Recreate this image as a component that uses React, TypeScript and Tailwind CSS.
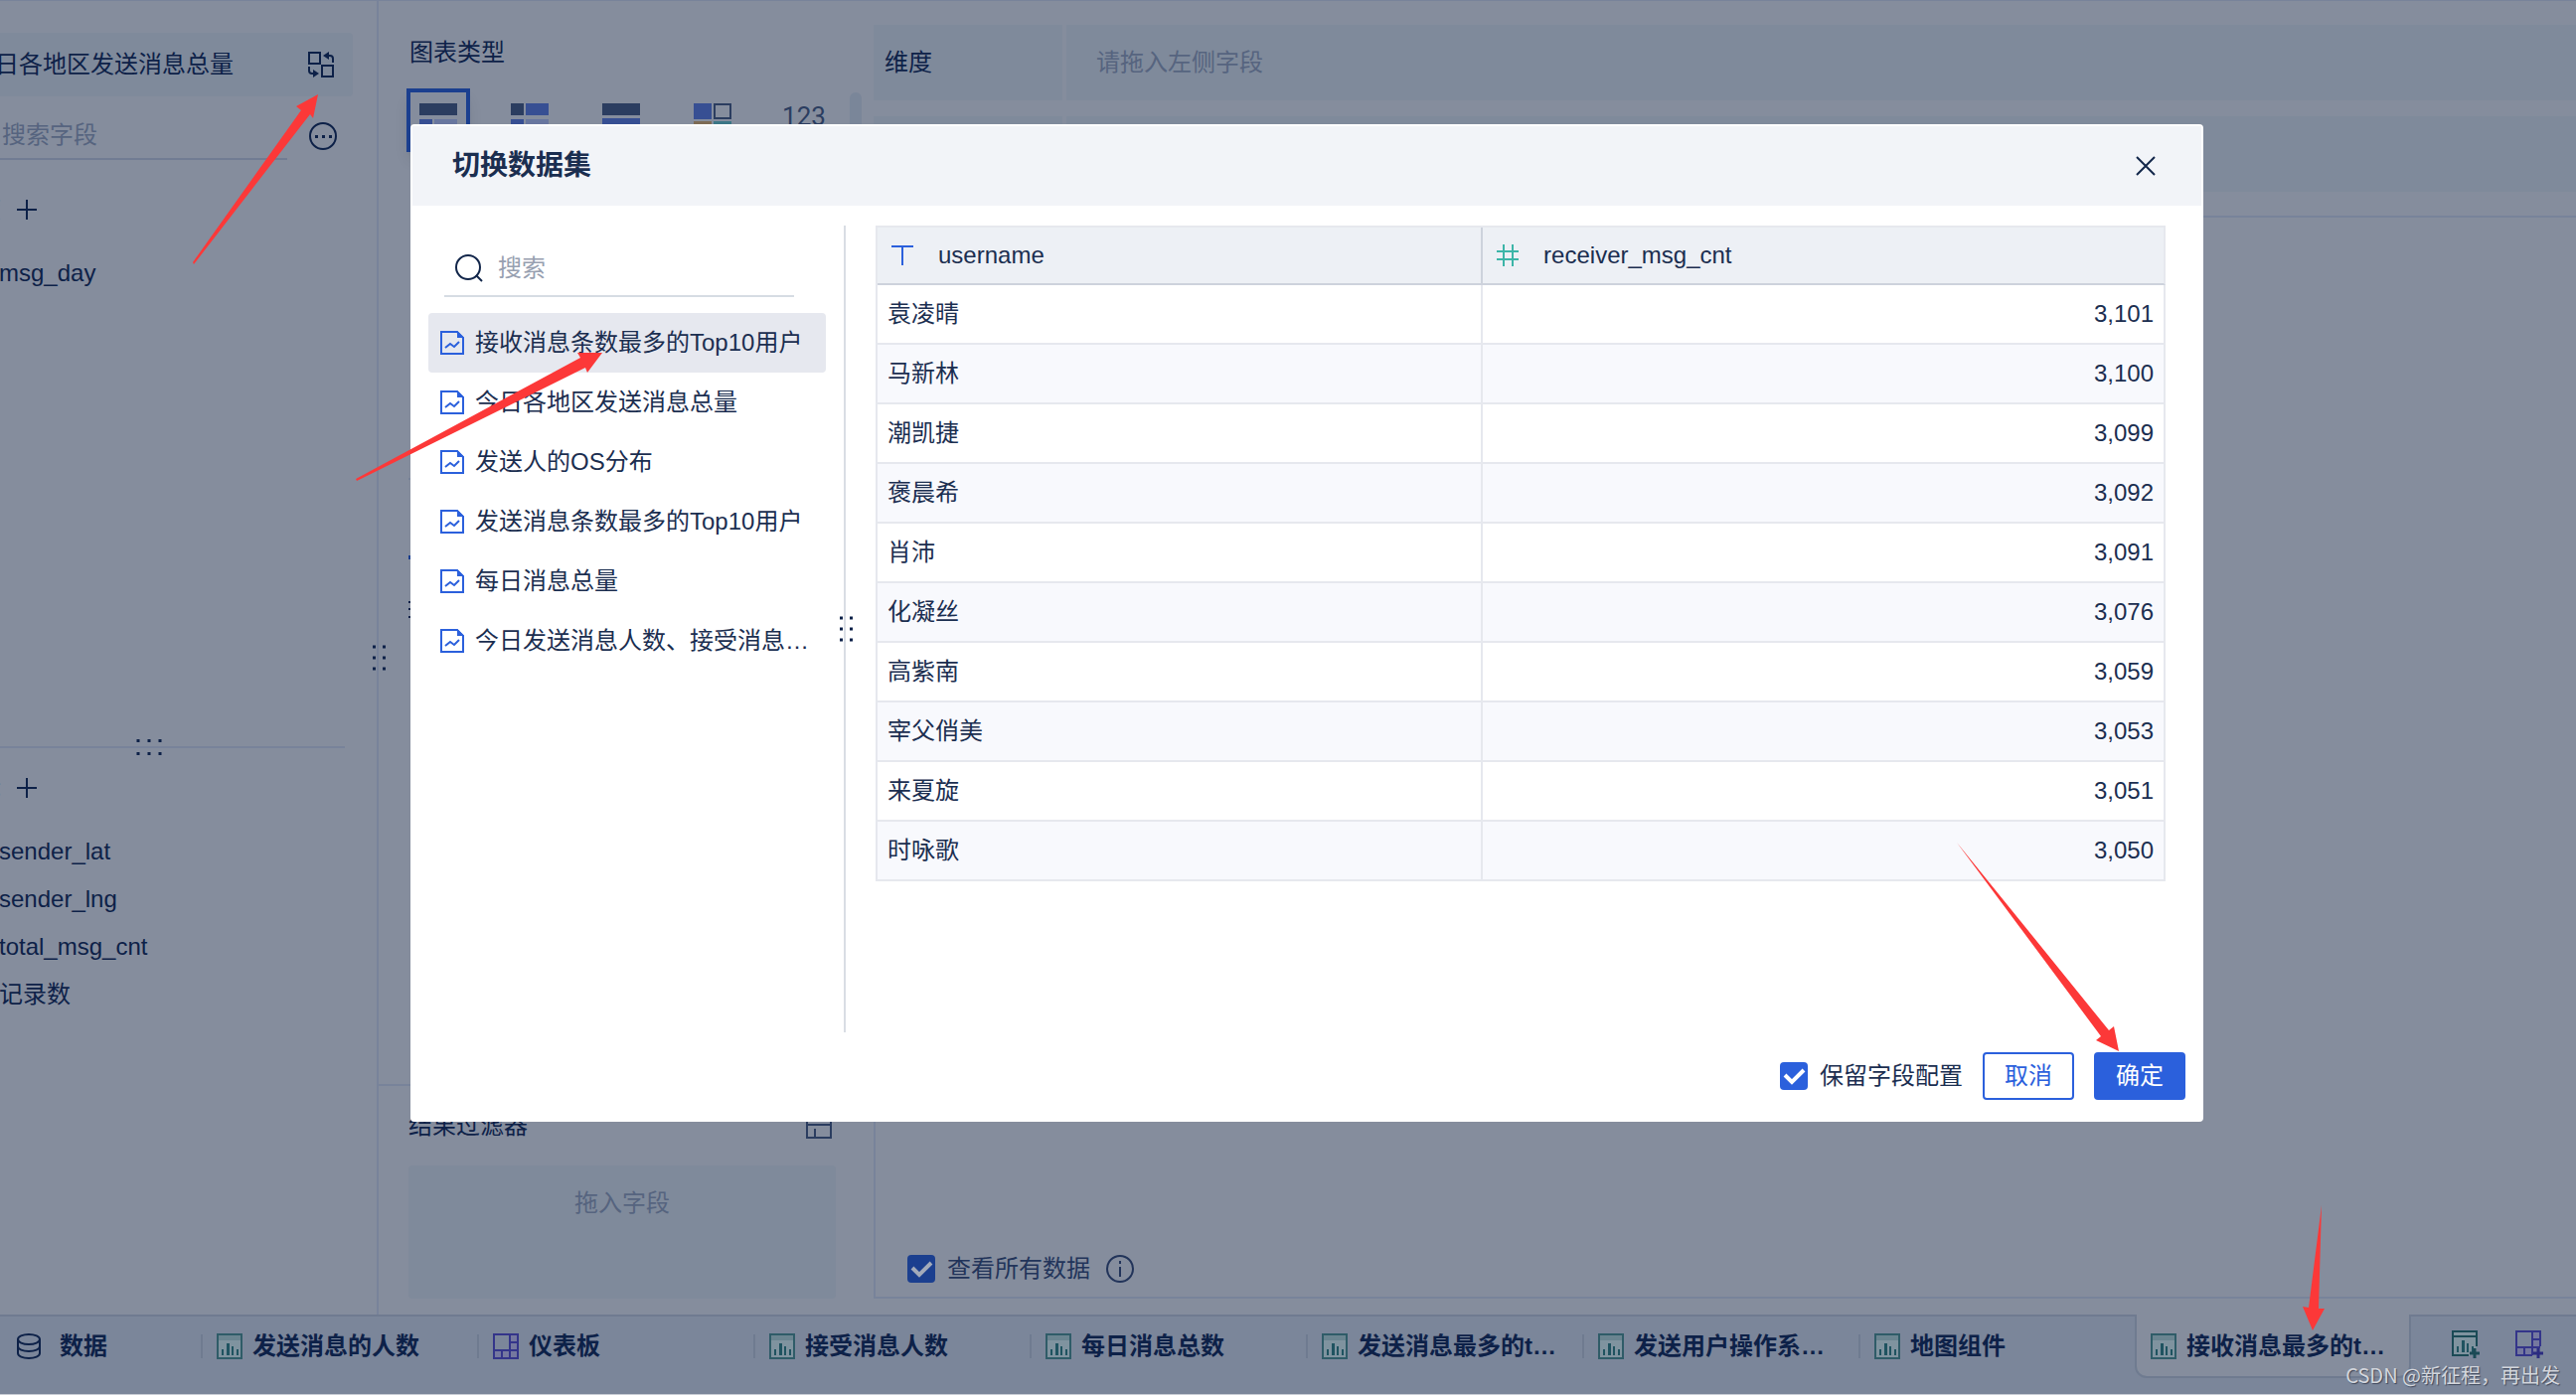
import { useState } from "react";
import type { ReactNode } from "react";

interface DatasetRow {
  username: string;
  count: string;
}

interface BottomTab {
  name: string;
  kind: "chart" | "dashboard";
}

const DATASETS = [
  "接收消息条数最多的Top10用户",
  "今日各地区发送消息总量",
  "发送人的OS分布",
  "发送消息条数最多的Top10用户",
  "每日消息总量",
  "今日发送消息人数、接受消息人数",
];

const ROWS: DatasetRow[] = [
  { username: "袁凌晴", count: "3,101" },
  { username: "马新林", count: "3,100" },
  { username: "潮凯捷", count: "3,099" },
  { username: "褒晨希", count: "3,092" },
  { username: "肖沛", count: "3,091" },
  { username: "化凝丝", count: "3,076" },
  { username: "高紫南", count: "3,059" },
  { username: "宰父俏美", count: "3,053" },
  { username: "来夏旋", count: "3,051" },
  { username: "时咏歌", count: "3,050" },
];

const TABS: BottomTab[] = [
  { name: "发送消息的人数", kind: "chart" },
  { name: "仪表板", kind: "dashboard" },
  { name: "接受消息人数", kind: "chart" },
  { name: "每日消息总数", kind: "chart" },
  { name: "发送消息最多的top10", kind: "chart" },
  { name: "发送用户操作系统分布", kind: "chart" },
  { name: "地图组件", kind: "chart" },
];

const MEASURES = ["sender_lat", "sender_lng", "total_msg_cnt", "记录数"];

const SwapIcon = () => (
  <svg width="26" height="28" viewBox="0 0 26 28" fill="none" stroke="currentColor" strokeWidth="2">
    <path d="M1 2h11v11H1zM14 15h11v11H14z" />
    <path d="M20 5h2a3 3 0 0 1 3 3v4M6 23H4a3 3 0 0 1-3-3v-4" />
    <path d="M15 5l6-4v8zM11 23l-6-4v8z" fill="currentColor" stroke="none" />
  </svg>
);

const MoreIcon = () => (
  <svg width="28" height="28" viewBox="0 0 28 28" fill="none">
    <circle cx="14" cy="14" r="13" stroke="currentColor" strokeWidth="2" />
    <path d="M6 13h3v3H6zM13 13h3v3h-3zM20 13h3v3h-3z" fill="currentColor" />
  </svg>
);

const PlusIcon = () => (
  <svg width="20" height="20" viewBox="0 0 20 20" stroke="currentColor" strokeWidth="2">
    <path d="M10 0v20M0 10h20" />
  </svg>
);

const FileIcon = () => (
  <svg className="shrink-0" width="26" height="26" viewBox="0 0 26 26" fill="none" stroke="#2b60dc" strokeWidth="2">
    <path d="M2 2h16l6 6v16H2z" />
    <path d="M18 1v7h7z" fill="#2b60dc" stroke="none" />
    <path d="M6 18l5-4 4 3 5-5" />
  </svg>
);

const SearchIcon = () => (
  <svg width="30" height="30" viewBox="0 0 30 30" fill="none" stroke="#12264a" strokeWidth="2">
    <circle cx="14" cy="14" r="12" />
    <path d="M22 22l6 6" />
  </svg>
);

const ChartIcon = ({ add = false }: { add?: boolean }) => (
  <svg className="shrink-0" width="30" height="30" viewBox="0 0 30 30" fill="none">
    <rect x="3" y="3" width="24" height="24" fill="#7f939f" />
    <path
      d={add ? "M19 27H3V3h24v15M3 8h24" : "M3 3h24v24H3z"}
      stroke={add ? "#1b4a56" : "#2f5c68"}
      strokeWidth="2"
    />
    {!add && <path d="M4 4h22v5H4z" fill="#6a8490" />}
    <path d="M7 18h2v6H7zM12 12h3v12h-3zM17 15h2v9h-2zM22 18h2v6h-2z" fill="#1f5360" />
    {add && <path d="M25 20v10M20 25h10" stroke="#1b4a56" strokeWidth="3" />}
  </svg>
);

const DashboardIcon = ({ add = false }: { add?: boolean }) => (
  <svg className="shrink-0" width="30" height="30" viewBox="0 0 30 30" fill="none">
    <path d="M19 3h8v24H3v-8h16z" fill="#75789f" />
    <path
      d={add ? "M19 27H3V3h24v15M19 3v24M3 19h24M11 19v8M19 11h8" : "M3 3h24v24H3zM19 3v24M3 19h24M11 19v8M19 11h8"}
      stroke="#34358a"
      strokeWidth="2"
    />
    {add && <path d="M25 20v10M20 25h10" stroke="#2b2c80" strokeWidth="3" />}
  </svg>
);

const DatabaseIcon = () => (
  <svg width="26" height="28" viewBox="0 0 26 28" fill="none" stroke="currentColor" strokeWidth="2">
    <ellipse cx="13" cy="7" rx="11" ry="5" />
    <path d="M2 7v14c0 3 5 5 11 5s11-2 11-5V7M2 14c0 3 5 5 11 5s11-2 11-5" />
  </svg>
);

const Grip = ({ horizontal = false }: { horizontal?: boolean }) => (
  <span
    className={
      horizontal
        ? "absolute left-1/2 top-1/2 grid -translate-x-1/2 -translate-y-1/2 grid-cols-3 gap-x-2 gap-y-2.5 text-[#0d2148]"
        : "absolute left-1/2 top-1/2 grid -translate-x-1/2 -translate-y-1/2 grid-cols-2 gap-x-2.5 gap-y-2 text-[#0d2148]"
    }
  >
    {[0, 1, 2, 3, 4, 5].map((dot) => (
      <i key={dot} className="size-[3px] bg-current" />
    ))}
  </span>
);

const CheckBox = ({ label, dim = false }: { label: string; dim?: boolean }) => {
  const [checked, setChecked] = useState(true);

  return (
    <label className="flex items-center gap-3">
      <span className="grid size-7">
        <input
          type="checkbox"
          checked={checked}
          onChange={(e) => setChecked(e.target.checked)}
          className={`col-start-1 row-start-1 size-7 appearance-none rounded ${
            dim ? "bg-[#1b3f8f]" : "bg-[#2b60dc]"
          }`}
        />
        {checked && (
          <svg
            className="pointer-events-none col-start-1 row-start-1"
            viewBox="0 0 28 28"
            fill="none"
            stroke={dim ? "#a3abba" : "#ffffff"}
            strokeWidth="4"
          >
            <path d="M5 13l7 7L24 8" />
          </svg>
        )}
      </span>
      {label}
    </label>
  );
};

const ChartTypes = () => (
  <div className="mt-5 flex pl-7 text-[#2b3d60]">
    <div className="flex gap-7">
      <button type="button" aria-label="分组表" className="flex size-16 justify-center border-4 border-[#1b3f8f] pt-[11px] shadow-lg">
        <svg className="shrink-0" width="38" height="36" viewBox="0 0 38 36">
          <path d="M0 0h38v12H0z" fill="#2b3d60" />
          <path d="M0 16h13v20H0z" fill="#374f93" />
          <path d="M15 16h23v9H15zM15 30h23v6H15z" fill="#68769f" />
        </svg>
      </button>
      <button type="button" aria-label="交叉表" className="flex size-16 justify-center pt-[15px]">
        <svg width="38" height="36" viewBox="0 0 38 36">
          <path d="M0 0h13v12H0z" fill="#2b3d60" />
          <path d="M15 0h23v12H15zM0 16h13v20H0z" fill="#374f93" />
          <path d="M15 16h23v20H15z" fill="#68769f" />
        </svg>
      </button>
      <button type="button" aria-label="明细表" className="flex size-16 justify-center pt-[15px]">
        <svg width="38" height="36" viewBox="0 0 38 36">
          <path d="M0 0h38v12H0z" fill="#2b3d60" />
          <path d="M0 15h38v8H0z" fill="#374f93" />
          <path d="M0 26h18v10H0zM20 26h18v10H20z" fill="#68769f" />
        </svg>
      </button>
      <button type="button" aria-label="颜色表格" className="flex size-16 justify-center pt-[15px]">
        <svg width="38" height="36" viewBox="0 0 38 36">
          <path d="M0 0h18v16H0z" fill="#374f93" />
          <path d="M21 1h16v14H21z" fill="none" stroke="#2b3d60" strokeWidth="2" />
          <path d="M0 18h18v18H0z" fill="#7d6b55" />
          <path d="M20 18h18v18H20z" fill="#3b7686" />
        </svg>
      </button>
      <button type="button" className="flex size-16 justify-center pt-3 font-[Roboto] text-[26px]/8">
        123
      </button>
    </div>
    <div className="ml-3.5 mt-1 h-60 w-3 rounded-full bg-[#7a8699]" />
  </div>
);

const Sidebar = () => (
  <aside className="relative -ml-[59px] flex w-[440px] shrink-0 flex-col border-r-2 border-[#78839a]">
    <div className="flex flex-[359] flex-col pt-8">
      <div className="mr-6 flex h-16 shrink-0 items-center justify-between rounded bg-[#7f8a9b] pl-[30px] pr-[19px]">
        <span>今日各地区发送消息总量</span>
        <button type="button" aria-label="切换数据集">
          <SwapIcon />
        </button>
      </div>
      <div className="mt-4 flex items-center pr-10">
        <input
          aria-label="搜索字段"
          placeholder="搜索字段"
          className="h-12 min-w-0 flex-1 border-b-2 border-[#717c93] bg-transparent pl-[61px] placeholder-[#56647f] outline-none"
        />
        <button type="button" aria-label="更多" className="ml-[22px]">
          <MoreIcon />
        </button>
      </div>
      <div className="mt-[26px] flex h-12 items-center gap-4 pl-3">
        <span className="text-[#56647f]">维度</span>
        <button type="button" aria-label="添加维度">
          <PlusIcon />
        </button>
      </div>
      <div className="mt-4 flex h-12 items-center pl-[58px]">msg_day</div>
    </div>
    <div className="relative ml-3 mr-8 h-0.5 shrink-0 bg-[#78839a]">
      <Grip horizontal />
    </div>
    <div className="flex-[277] pt-4">
      <div className="flex h-12 items-center gap-4 pl-3">
        <span className="text-[#56647f]">指标</span>
        <button type="button" aria-label="添加指标">
          <PlusIcon />
        </button>
      </div>
      <ul className="mt-4 pl-[58px]">
        {MEASURES.map((name) => (
          <li key={name} className="flex h-12 items-center">
            {name}
          </li>
        ))}
      </ul>
    </div>
    <div className="absolute inset-y-0 -right-0.5 w-0.5">
      <Grip />
    </div>
  </aside>
);

const ConfigPanel = () => (
  <section className="flex w-[498px] shrink-0 flex-col">
    <div className="flex-1 border-b-2 border-[#78839a] pt-9">
      <h2 className="pl-[31px]">图表类型</h2>
      <ChartTypes />
      <div className="ml-[30px] mr-[38px] mt-[148px] border-t-2 border-[#78839a] pt-9">
        <div className="h-11 w-24 border-b-4 border-[#1b3f8f]" />
        <svg className="mt-10" width="24" height="20" viewBox="0 0 24 20" stroke="#0d2148" strokeWidth="2">
          <path d="M0 3h24M0 10h24M0 18h24" />
        </svg>
      </div>
    </div>
    <div className="pb-4 pl-[30px] pr-[38px] pt-6">
      <div className="flex items-center justify-between pr-1">
        <h2>结果过滤器</h2>
        <svg width="26" height="26" viewBox="0 0 26 26" fill="none" stroke="#2b3d60" strokeWidth="2">
          <path d="M1 1h24v24H1zM1 12h24M9 16v8" />
        </svg>
      </div>
      <div className="mt-6 h-[134px] rounded bg-[#7f8a9b] pt-[22px] text-center text-[#56647f]">拖入字段</div>
    </div>
  </section>
);

const ShelfRow = ({ label }: { label: string }) => (
  <div className="flex h-[76px] gap-1">
    <div className="flex w-[190px] items-center bg-[#7f8a9b] pl-[11px]">{label}</div>
    <div className="flex flex-1 items-center bg-[#7f8a9b] pl-[30px] text-[#56647f]">请拖入左侧字段</div>
  </div>
);

const Canvas = () => (
  <section className="flex flex-1 flex-col pb-4 pt-6">
    <div className="flex flex-col gap-4">
      <ShelfRow label="维度" />
      <ShelfRow label="指标" />
    </div>
    <div className="mt-6 flex flex-1 flex-col justify-end border-y-2 border-l-2 border-[#78839a] pb-3 pl-8">
      <div className="flex items-center gap-4 text-[#22345a]">
        <CheckBox label="查看所有数据" dim />
        <svg width="28" height="28" viewBox="0 0 28 28" fill="none" stroke="currentColor" strokeWidth="2">
          <circle cx="14" cy="14" r="13" />
          <path d="M14 12v10M14 6v3" />
        </svg>
      </div>
    </div>
  </section>
);

const TabBar = () => (
  <footer className="flex h-[81px] shrink-0 border-b border-[#c9cdd5] bg-[#7b869a] font-bold">
    <button type="button" className="flex w-[202px] items-start border-t-2 border-[#6f7b90] pl-4 pt-3.5 font-bold">
      <span className="flex h-8 items-center gap-[18px]">
        <DatabaseIcon />
        数据
      </span>
    </button>
    {TABS.map((tab) => (
      <button
        key={tab.name}
        type="button"
        className="flex w-[278px] items-start border-t-2 border-[#6f7b90] pt-3.5 text-left font-bold"
      >
        <span className="flex h-8 w-full items-center">
          <i className="h-6 w-0.5 bg-[#6f7b90]" />
          <span className="ml-3 flex min-w-0 flex-1 items-center gap-2 pr-5">
            {tab.kind === "chart" ? <ChartIcon /> : <DashboardIcon />}
            <span className="truncate">{tab.name}</span>
          </span>
        </span>
      </button>
    ))}
    <button
      type="button"
      className="flex h-16 w-[278px] items-start rounded-b-xl border-x-2 border-b-2 border-[#6f7b90] bg-[#858d9d] pl-3 pr-5 pt-4 text-left font-bold"
    >
      <span className="flex h-8 w-full items-center gap-2">
        <ChartIcon />
        <span className="truncate">接收消息最多的top10</span>
      </span>
    </button>
    <div className="flex flex-1 items-start gap-[34px] border-t-2 border-[#6f7b90] pl-[39px] pt-3">
      <button type="button" aria-label="添加组件">
        <ChartIcon add />
      </button>
      <button type="button" aria-label="添加仪表板">
        <DashboardIcon add />
      </button>
    </div>
  </footer>
);

const HeadCell = ({ icon, children }: { icon: ReactNode; children: ReactNode }) => (
  <div className="flex items-center gap-6 pl-[13px]">
    {icon}
    {children}
  </div>
);

const DatasetDialog = () => {
  const [selected, setSelected] = useState(0);

  return (
    <div className="absolute inset-0 pb-[275px] pl-[413px] pr-[375px] pt-[125px]">
      <div
        role="dialog"
        aria-labelledby="dialog-title"
        className="flex h-full flex-col rounded border-2 border-white bg-white text-[#1b2e50]"
      >
        <header className="flex h-20 items-center justify-between bg-[#f2f4f8] pl-10 pr-[46px]">
          <h1 id="dialog-title" className="text-[28px] font-bold">
            切换数据集
          </h1>
          <button type="button" aria-label="关闭">
            <svg width="20" height="20" viewBox="0 0 20 20" stroke="#12264a" strokeWidth="2">
              <path d="M1 1l18 18M19 1L1 19" />
            </svg>
          </button>
        </header>

        <div className="flex flex-1 pt-5">
          <div className="w-[434px] shrink-0 pl-4 pr-[18px] pt-5">
            <label className="ml-4 mr-8 flex h-[52px] items-center gap-3.5 border-b-2 border-[#d6dce3] pb-1 pl-2.5">
              <SearchIcon />
              <input aria-label="搜索" placeholder="搜索" className="min-w-0 flex-1 placeholder-[#97a0b0] outline-none" />
            </label>
            <ul className="mt-4">
              {DATASETS.map((name, index) => (
                <li key={name}>
                  <button
                    type="button"
                    onClick={() => setSelected(index)}
                    className={`flex h-[60px] w-full items-center gap-2.5 rounded pl-[11px] pr-3 text-left ${
                      index === selected ? "bg-[#e6e8ef]" : ""
                    }`}
                  >
                    <FileIcon />
                    <span className="truncate">{name}</span>
                  </button>
                </li>
              ))}
            </ul>
          </div>
          <div className="relative w-0.5 bg-[#d9dde4]">
            <Grip />
          </div>
          <div className="flex-1 pl-[30px] pr-9">
            <table className="w-full table-fixed border-separate border-spacing-0 border-l-2 border-t-2 border-[#e6e8ee]">
              <thead>
                <tr className="h-[58px] bg-[#edf0f5] text-left">
                  <th className="w-[47%] border-b-2 border-r-2 border-[#cdd2dc] p-0 font-normal">
                    <HeadCell
                      icon={
                        <svg width="24" height="24" viewBox="0 0 24 24" stroke="#2b60dc" strokeWidth="2">
                          <path d="M1 3h22M12 3v19" />
                        </svg>
                      }
                    >
                      username
                    </HeadCell>
                  </th>
                  <th className="border-b-2 border-r-2 border-b-[#cdd2dc] border-r-[#e6e8ee] p-0 font-normal">
                    <HeadCell
                      icon={
                        <svg width="24" height="24" viewBox="0 0 24 24" stroke="#3cb5a8" strokeWidth="2">
                          <path d="M8 1v22M17 1v22M1 8h22M1 16h22" />
                        </svg>
                      }
                    >
                      receiver_msg_cnt
                    </HeadCell>
                  </th>
                </tr>
              </thead>
              <tbody>
                {ROWS.map((row) => (
                  <tr key={row.username} className="h-[60px] even:bg-[#f8f9fd]">
                    <td className="border-b-2 border-r-2 border-[#e6e8ee] py-0 pl-2.5">{row.username}</td>
                    <td className="border-b-2 border-r-2 border-[#e6e8ee] py-0 pr-2.5 text-right">{row.count}</td>
                  </tr>
                ))}
              </tbody>
            </table>
          </div>
        </div>

        <div className="flex items-center justify-end gap-5 pb-5 pr-4 pt-5">
          <CheckBox label="保留字段配置" />
          <button type="button" className="h-12 w-[92px] rounded border-2 border-[#2b60dc] text-[#2b60dc]">
            取消
          </button>
          <button type="button" className="h-12 w-[92px] rounded bg-[#2b60dc] text-white">
            确定
          </button>
        </div>
      </div>
    </div>
  );
};

// Red arrows that walk through the steps: swap -> pick -> confirm -> result
const Arrows = () => (
  <svg className="pointer-events-none absolute inset-0 size-full" fill="#fc3838">
    <path d="M320 95L298 107L303 111L194 264L195 266L312 115L315 119Z" />
    <path d="M606 355L581 355L584 360L358 482L359 484L589 370L591 375Z" />
    <path d="M2132 1058L2127 1033L2122 1037L1969 848L2114 1043L2109 1047Z" />
    <path d="M2327 1339L2317 1315L2323 1316L2336 1213L2333 1317L2339 1317Z" />
  </svg>
);

const App = () => (
  <div className="relative flex min-h-screen flex-col overflow-hidden bg-[#858d9d] font-['Liberation_Sans','Noto_Sans_CJK_SC',sans-serif] text-2xl text-[#0d2148]">
    <main className="flex flex-1 border-t border-[#78839a]">
      <Sidebar />
      <ConfigPanel />
      <Canvas />
    </main>
    <TabBar />
    <DatasetDialog />
    <Arrows />
    <p className="absolute bottom-1.5 right-4 font-['Noto_Sans_CJK_SC',sans-serif] text-xl text-[#d3d6dc] [text-shadow:1px_1px_1px_#3d465a]">
      CSDN @新征程，再出发
    </p>
  </div>
);

export default App;
